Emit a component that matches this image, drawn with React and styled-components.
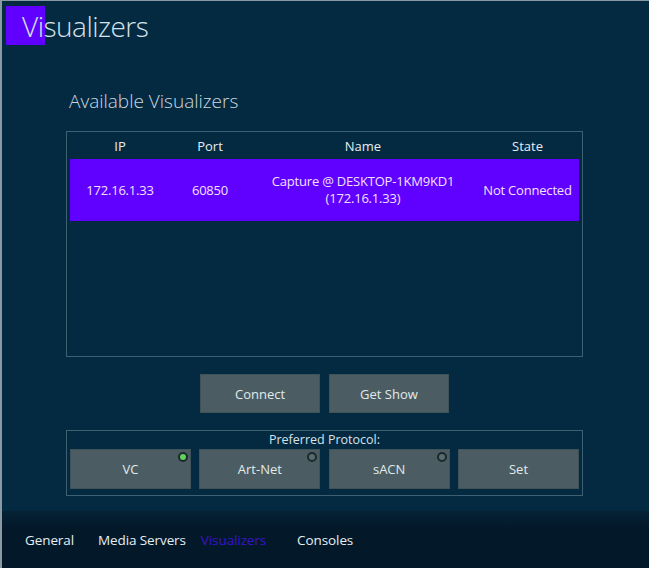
import React from 'react';
import styled, { createGlobalStyle } from 'styled-components';

const GlobalStyle = createGlobalStyle`
  html, body {
    margin: 0;
    padding: 0;
    background: #042a42;
  }
  * { box-sizing: border-box; }
`;

const rows = [
  { ip: '172.16.1.33', port: '60850', name: ['Capture @ DESKTOP-1KM9KD1', '(172.16.1.33)'], state: 'Not Connected' },
];

const protocols = [
  { label: 'VC', led: 'on' },
  { label: 'Art-Net', led: 'off' },
  { label: 'sACN', led: 'off' },
  { label: 'Set' },
];

const tabs = [
  { label: 'General', space: 24 },
  { label: 'Media Servers', space: 15 },
  { label: 'Visualizers', space: 31, active: true },
  { label: 'Consoles', space: 0 },
];

const App = () => (
  <Window>
    <GlobalStyle />
    <Main>
      <Title>Visualizers</Title>
      <Content>
        <Heading>Available Visualizers</Heading>
        <Table>
          <HeadRow>
            <Cell>IP</Cell>
            <Cell>Port</Cell>
            <Cell>Name</Cell>
            <Cell>State</Cell>
          </HeadRow>
          {rows.map((r) => (
            <DataRow key={r.ip} selected>
              <Cell>{r.ip}</Cell>
              <Cell>{r.port}</Cell>
              <Cell>{r.name[0]}<br />{r.name[1]}</Cell>
              <Cell>{r.state}</Cell>
            </DataRow>
          ))}
        </Table>
        <Actions>
          <Button>Connect</Button>
          <Button>Get Show</Button>
        </Actions>
        <Protocol>
          <ProtocolLabel>Preferred Protocol:</ProtocolLabel>
          <ProtocolButtons>
            {protocols.map((p) => (
              <Button key={p.label} wide>
                {p.label}
                {p.led && <Led on={p.led === 'on' ? 1 : 0} />}
              </Button>
            ))}
          </ProtocolButtons>
        </Protocol>
      </Content>
    </Main>
    <Footer>
      {tabs.map((t) => (
        <Tab key={t.label} active={t.active ? 1 : 0} space={t.space}>{t.label}</Tab>
      ))}
    </Footer>
  </Window>
);

const Window = styled.div`
  width: 649px;
  height: 568px;
  display: flex;
  flex-direction: column;
  background: #042a42;
  border-left: 2px solid #8a9aa3;
  border-top: 1px solid #8a9aa3;
  font-family: "Open Sans", "Noto Sans", sans-serif;
  color: #e8eef0;
  overflow: hidden;
`;
const Main = styled.div`
  flex: 1;
  padding: 5px 0 0 4px;
  display: flex;
  flex-direction: column;
`;
const Title = styled.h1`
  position: relative;
  isolation: isolate;
  margin: 0;
  padding-left: 16px;
  height: 40px;
  font-size: 28px;
  font-weight: 300;
  line-height: 40px;
  color: #d4e2ea;
  letter-spacing: -0.5px;
  &::before {
    content: '';
    position: absolute;
    left: 0;
    top: 0;
    width: 39px;
    height: 39px;
    background: #6000ff;
    z-index: -1;
  }
`;
const Content = styled.div`
  margin-left: 60px;
  width: 517px;
  display: flex;
  flex-direction: column;
`;
const Heading = styled.h2`
  margin: 42px 0 17px 3px;
  font-size: 19px;
  font-weight: 300;
  line-height: 26px;
  color: #c9d8e0;
`;
const Table = styled.div`
  height: 226px;
  border: 1px solid #3d6073;
  padding: 0 3px;
`;
const HeadRow = styled.div`
  display: grid;
  grid-template-columns: 100px 80px 226px 1fr;
  height: 27px;
  align-items: center;
  font-size: 13px;
  color: #e6eef2;
`;
const DataRow = styled(HeadRow)`
  height: 62px;
  background: ${(p) => (p.selected ? '#6000ff' : 'transparent')};
  color: #f3e2ff;
  line-height: 17px;
  letter-spacing: -0.2px;
`;
const Cell = styled.div`
  text-align: center;
`;
const Actions = styled.div`
  display: flex;
  justify-content: center;
  gap: 9px;
  margin: 17px 0;
`;
const Button = styled.div`
  position: relative;
  width: ${(p) => (p.wide ? '121px' : '120px')};
  height: ${(p) => (p.wide ? '40px' : '39px')};
  background: #4b5d62;
  border: 1px solid #3e5257;
  display: flex;
  align-items: center;
  justify-content: center;
  font-size: 13px;
  color: #e2eaea;
`;
const Led = styled.span`
  position: absolute;
  top: 2px;
  right: 2px;
  width: 10px;
  height: 10px;
  border-radius: 50%;
  border: 2px solid #1b282c;
  background: ${(p) => (p.on ? '#5fd35a' : '#5b6a6f')};
`;
const Protocol = styled.div`
  border: 1px solid #3d6073;
  height: 66px;
  padding: 0 3px;
  display: flex;
  flex-direction: column;
  align-items: center;
`;
const ProtocolLabel = styled.div`
  font-size: 12.5px;
  line-height: 18px;
  color: #d6e2ea;
`;
const ProtocolButtons = styled.div`
  display: flex;
  gap: 8px;
  width: 100%;
  justify-content: space-between;
`;
const Footer = styled.nav`
  height: 57px;
  background: linear-gradient(#052235, #03192a 30%);
  display: flex;
  align-items: center;
  padding: 0 0 0 23px;
`;
const Tab = styled.span`
  font-size: 13.5px;
  letter-spacing: -0.1px;
  color: ${(p) => (p.active ? '#3a12c8' : '#e6eef2')};
  margin-right: ${(p) => p.space}px;
`;

export default App;
